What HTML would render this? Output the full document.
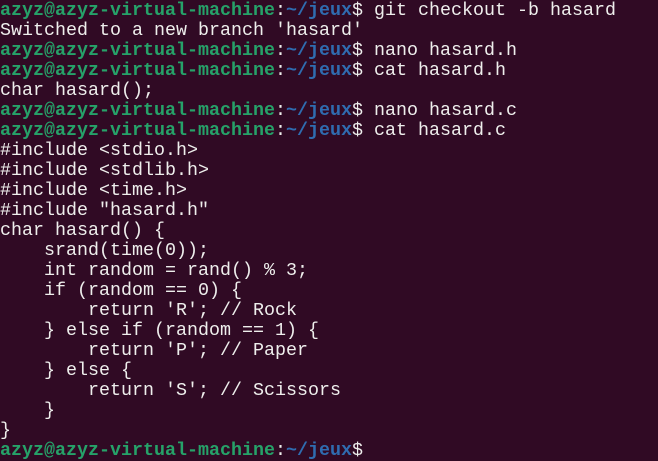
<!DOCTYPE html>
<html><head><style>
html,body{margin:0;padding:0;background:#300a24;width:658px;height:458px;overflow:hidden}
pre{margin:0;position:absolute;left:0;top:1px;font-family:"Liberation Mono","DejaVu Sans Mono",monospace;font-size:18.33px;line-height:20px;color:#eeeeec}
.g{color:#26a269;font-weight:bold}
.b{color:#2f6cb0;font-weight:bold}
</style></head><body><pre><span class="g">azyz@azyz-virtual-machine</span>:<span class="b">~/jeux</span>$ git checkout -b hasard
Switched to a new branch 'hasard'
<span class="g">azyz@azyz-virtual-machine</span>:<span class="b">~/jeux</span>$ nano hasard.h
<span class="g">azyz@azyz-virtual-machine</span>:<span class="b">~/jeux</span>$ cat hasard.h
char hasard();
<span class="g">azyz@azyz-virtual-machine</span>:<span class="b">~/jeux</span>$ nano hasard.c
<span class="g">azyz@azyz-virtual-machine</span>:<span class="b">~/jeux</span>$ cat hasard.c
#include &lt;stdio.h&gt;
#include &lt;stdlib.h&gt;
#include &lt;time.h&gt;
#include "hasard.h"
char hasard() {
    srand(time(0));
    int random = rand() % 3;
    if (random == 0) {
        return 'R'; // Rock
    } else if (random == 1) {
        return 'P'; // Paper
    } else {
        return 'S'; // Scissors
    }
}
<span class="g">azyz@azyz-virtual-machine</span>:<span class="b">~/jeux</span>$ </pre></body></html>
